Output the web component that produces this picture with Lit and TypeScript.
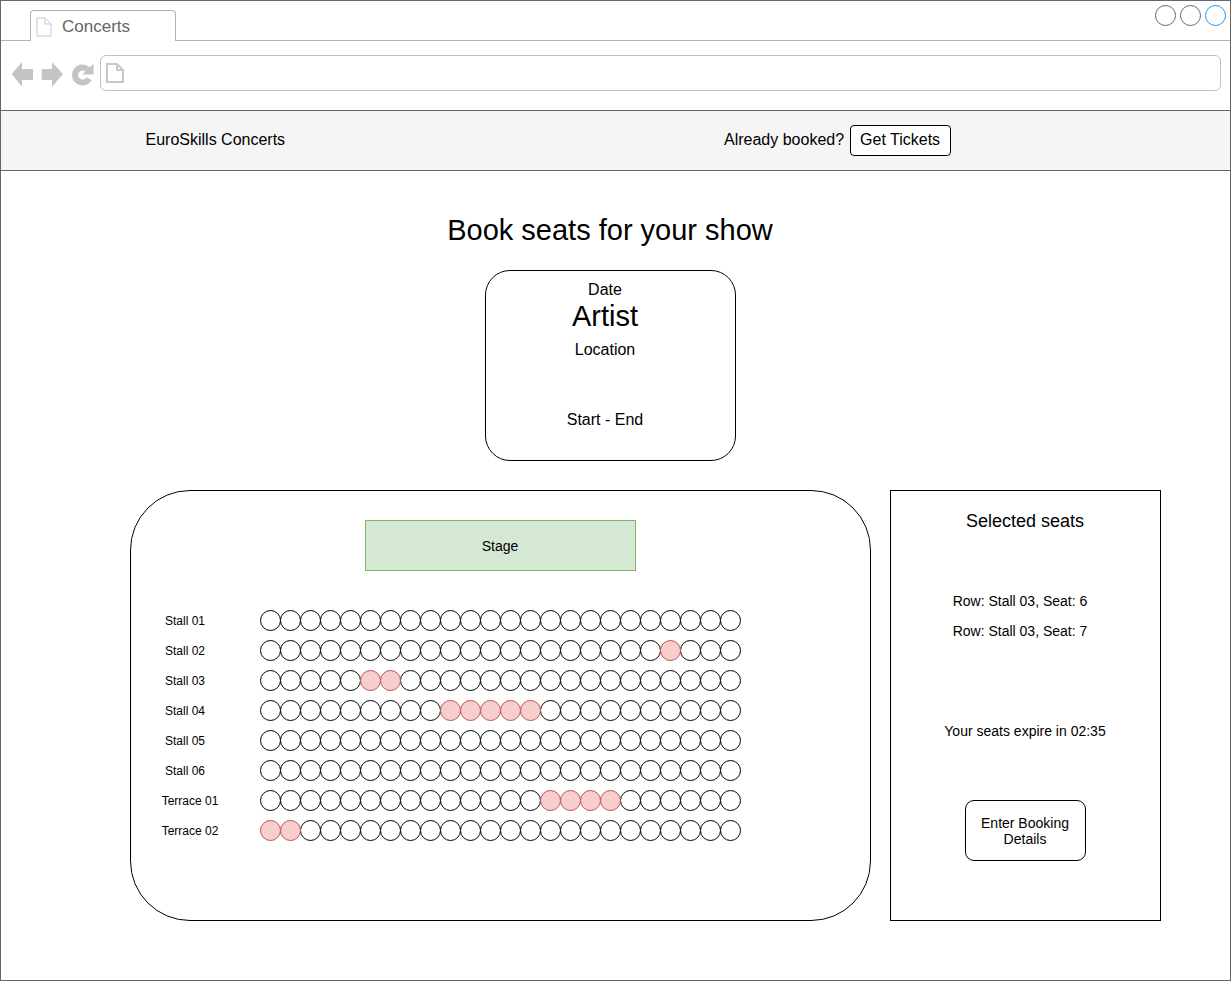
import { LitElement, html, css } from "lit";
import { customElement } from "lit/decorators.js";

const ROWS: { label: string; taken: number[] }[] = [
  { label: "Stall 01", taken: [] },
  { label: "Stall 02", taken: [20] },
  { label: "Stall 03", taken: [5, 6] },
  { label: "Stall 04", taken: [9, 10, 11, 12, 13] },
  { label: "Stall 05", taken: [] },
  { label: "Stall 06", taken: [] },
  { label: "Terrace 01", taken: [14, 15, 16, 17] },
  { label: "Terrace 02", taken: [0, 1] },
];
const SEATS = 24;

@customElement("app-root")
export class AppRoot extends LitElement {
  static styles = css`
    :host {
      display: block;
      width: 1231px;
      height: 981px;
      font-family: "Liberation Sans", Arial, sans-serif;
      color: #000;
      background: #fff;
    }
    .frame {
      box-sizing: border-box;
      width: 1231px;
      height: 981px;
      border: 1px solid #666;
      display: flex;
      flex-direction: column;
    }
    .tabstrip {
      box-sizing: border-box;
      height: 40px;
      border-bottom: 1px solid #b3b3b3;
      display: flex;
      justify-content: space-between;
      padding: 4px 4px 0 29px;
    }
    .tab {
      box-sizing: border-box;
      width: 146px;
      height: 31px;
      margin-top: 5px;
      border: 1px solid #b3b3b3;
      border-bottom: none;
      border-radius: 4px 4px 0 0;
      background: #fff;
      display: flex;
      align-items: center;
      gap: 10px;
      padding: 2px 0 0 5px;
      font-size: 17px;
      color: #666;
    }
    .winbtns {
      display: flex;
      gap: 4px;
    }
    .winbtn {
      box-sizing: border-box;
      width: 21px;
      height: 21px;
      border: 1px solid #666;
      border-radius: 50%;
    }
    .winbtn.active {
      border-color: #2196f3;
    }
    .toolbar {
      box-sizing: border-box;
      height: 70px;
      border-bottom: 1px solid #666;
      display: flex;
      align-items: flex-start;
      padding: 14px 9px 0 10px;
    }
    .nav {
      width: 89px;
      height: 36px;
      flex: none;
    }
    .address {
      box-sizing: border-box;
      width: 1121px;
      height: 36px;
      border: 1px solid #c0c0c0;
      border-radius: 6px;
      display: flex;
      align-items: center;
      padding-left: 5px;
    }
    .header {
      box-sizing: border-box;
      height: 60px;
      background: #f5f5f5;
      border-bottom: 1px solid #666;
      display: flex;
      align-items: center;
      padding-left: 144.5px;
      font-size: 16px;
    }
    .brand {
      width: 578.5px;
      padding-bottom: 2px;
    }
    .booked {
      padding-bottom: 2px;
    }
    .get {
      box-sizing: border-box;
      width: 101px;
      height: 31px;
      margin-left: 6px;
      border: 1px solid #000;
      border-radius: 4px;
      background: #fff;
      display: flex;
      align-items: center;
      justify-content: center;
      padding: 0 1px 2px 0;
    }
    .main {
      flex: 1;
      display: flex;
      flex-direction: column;
      align-items: center;
      padding-right: 10px;
    }
    h1 {
      margin: 40px 0 0;
      height: 40px;
      line-height: 38px;
      font-size: 29px;
      font-weight: 400;
      padding-right: 1px;
    }
    .event {
      box-sizing: border-box;
      width: 251px;
      height: 191px;
      margin-top: 19px;
      border: 1px solid #000;
      border-radius: 25px;
      padding: 10px 11px 0 0;
      display: flex;
      flex-direction: column;
      align-items: center;
      font-size: 16px;
      line-height: 18px;
    }
    .artist {
      font-size: 29px;
      line-height: 34px;
    }
    .location {
      margin-top: 8px;
    }
    .times {
      margin-top: 52px;
    }
    .booking {
      width: 100%;
      display: flex;
      gap: 19px;
      margin-top: 29px;
      padding-left: 129px;
      box-sizing: border-box;
    }
    .hall {
      box-sizing: border-box;
      width: 741px;
      height: 431px;
      border: 1px solid #000;
      border-radius: 60px;
      padding: 29px 0 0 24px;
    }
    .stage {
      box-sizing: border-box;
      width: 271px;
      height: 51px;
      margin-left: 210px;
      background: #d5e8d4;
      border: 1px solid #82b366;
      display: flex;
      align-items: center;
      justify-content: center;
      font-size: 14px;
      padding-right: 1px;
    }
    .rows {
      margin-top: 39px;
      display: flex;
      flex-direction: column;
      gap: 9px;
    }
    .row {
      display: flex;
      align-items: center;
    }
    .label {
      width: 60px;
      margin-right: 45px;
      text-align: center;
      font-size: 12px;
      white-space: nowrap;
      padding-top: 1px;
    }
    .label.wide {
      margin-left: 5px;
      margin-right: 40px;
    }
    .seat {
      box-sizing: border-box;
      width: 21px;
      height: 21px;
      border: 1px solid #000;
      border-radius: 50%;
      margin-right: -1px;
      background: #fff;
    }
    .seat.taken {
      background: #f8cecc;
      border-color: #b85450;
      position: relative;
    }
    .summary {
      box-sizing: border-box;
      width: 271px;
      height: 431px;
      border: 1px solid #000;
      display: flex;
      flex-direction: column;
      align-items: center;
      padding-top: 20px;
      font-size: 14px;
    }
    .summary h2 {
      margin: 0;
      font-size: 18px;
      font-weight: 400;
      line-height: 21px;
      padding-right: 1px;
    }
    .picked {
      margin-top: 61px;
      line-height: 16px;
      padding-right: 11px;
    }
    .picked + .picked {
      margin-top: 14px;
    }
    .expire {
      margin-top: 84px;
      line-height: 16px;
      padding-right: 1px;
    }
    .details {
      box-sizing: border-box;
      width: 121px;
      height: 61px;
      margin-top: 61px;
      border: 1px solid #000;
      border-radius: 9px;
      display: flex;
      align-items: center;
      justify-content: center;
      text-align: center;
      line-height: 16px;
      padding-right: 1px;
    }
  `;

  private page(w: number, h: number, stroke: string, sw: number) {
    const f = 6;
    return html`<svg width=${w + 2} height=${h + 2} viewBox="0 0 ${w + 2} ${h + 2}">
      <path
        d="M1 1H${w + 1 - f}L${w + 1} ${1 + f}V${h + 1}H1Z M${w + 1 - f} 1V${1 + f}H${w + 1}"
        fill="#fff"
        stroke=${stroke}
        stroke-width=${sw}
      />
    </svg>`;
  }

  private navIcons() {
    return html`<svg class="nav" viewBox="0 0 89 36">
      <path d="M0.700 19L11 7V14H22V25H11V31.700Z" fill="#c4c4c4" />
      <path d="M30.700 14H41V7L52 19L41 31.700V25H30.700Z" fill="#c4c4c4" />
      <path
        d="M76.800 14.700A7.500 7.500 0 1 0 78 23.800"
        fill="none"
        stroke="#c4c4c4"
        stroke-width="6"
      />
      <path d="M82.500 8.500V19.500H71.500Z" fill="#c4c4c4" />
    </svg>`;
  }

  render() {
    return html`
      <div class="frame">
        <div class="tabstrip">
          <div class="tab">
            ${this.page(14, 18, "#c8c8c8", 1)}
            <span>Concerts</span>
          </div>
          <div class="winbtns">
            <div class="winbtn"></div>
            <div class="winbtn"></div>
            <div class="winbtn active"></div>
          </div>
        </div>
        <div class="toolbar">
          ${this.navIcons()}
          <div class="address">${this.page(16, 18, "#c8c8c8", 2)}</div>
        </div>
        <div class="header">
          <div class="brand">EuroSkills Concerts</div>
          <div class="booked">Already booked?</div>
          <div class="get">Get Tickets</div>
        </div>
        <div class="main">
          <h1>Book seats for your show</h1>
          <div class="event">
            <div>Date</div>
            <div class="artist">Artist</div>
            <div class="location">Location</div>
            <div class="times">Start - End</div>
          </div>
          <div class="booking">
            <div class="hall">
              <div class="stage">Stage</div>
              <div class="rows">
                ${ROWS.map(
                  (r) => html`<div class="row">
                    <div class="label ${r.label.startsWith("Terrace") ? "wide" : ""}">${r.label}</div>
                    ${Array.from(
                      { length: SEATS },
                      (_, i) =>
                        html`<div class="seat ${r.taken.includes(i) ? "taken" : ""}"></div>`
                    )}
                  </div>`
                )}
              </div>
            </div>
            <div class="summary">
              <h2>Selected seats</h2>
              <div class="picked">Row: Stall 03, Seat: 6</div>
              <div class="picked">Row: Stall 03, Seat: 7</div>
              <div class="expire">Your seats expire in 02:35</div>
              <div class="details">Enter Booking<br />Details</div>
            </div>
          </div>
        </div>
      </div>
    `;
  }
}
